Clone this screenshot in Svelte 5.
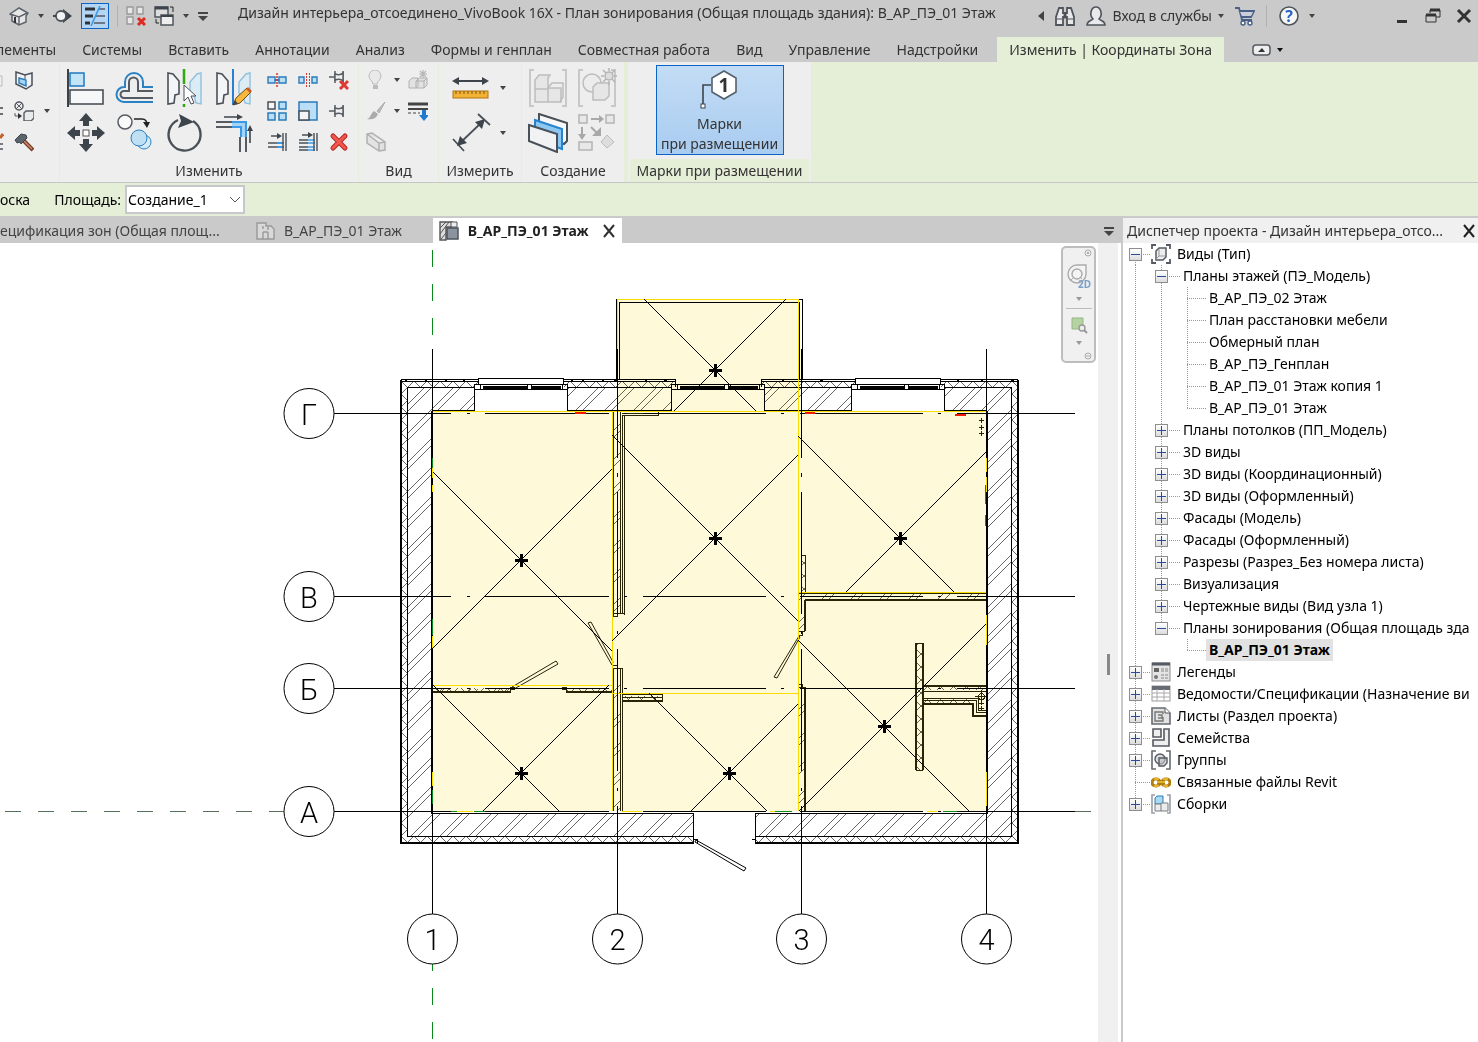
<script lang="ts">
	type Zone = { x1: number; y1: number; x2: number; y2: number; cx: number; cy: number };
	type Row = {
		level: number;
		text: string;
		icon?: string;
		state?: 'open' | 'closed';
		last?: boolean;
		tail?: boolean;
		current?: boolean;
	};

	const menu = [
		'лементы',
		'Системы',
		'Вставить',
		'Аннотации',
		'Анализ',
		'Формы и генплан',
		'Совместная работа',
		'Вид',
		'Управление',
		'Надстройки'
	];

	const mirrorLeft =
		'<path d="M4 5l5 1 6 7v13l-4 1-1 8-6 1z" fill="#f4f5f6" stroke="#4a5058" stroke-width="1.6"/>';
	const mirrorRight =
		'<path d="M37 5l-4 1-7 8v12l4 1 2 8 5 1z" fill="#dcecf5" stroke="#8fc1dd" stroke-width="1.4"/>';
	const bracket = (c: string) =>
		`<path d="M6 2H2v36h4M34 2h4v36h-4" fill="none" stroke="${c}" stroke-width="2"/>`;

	const icons: Record<string, string> = {
		// large, 40 x 40
		align:
			'<path d="M2 1v38" stroke="#3b4148" stroke-width="2"/><rect x="4" y="5" width="14" height="13" fill="#c2e4f6" stroke="#1f78c0" stroke-width="1.5"/><rect x="4" y="22" width="33" height="14" fill="#f6f7f8" stroke="#4a5058" stroke-width="1.6"/>',
		offset:
			'<path d="M38 19H28V14a9 9 0 0 0-18 0v5H9a7 7 0 0 0 0 15h29" fill="none" stroke="#2a82c4" stroke-width="2"/><path d="M38 23H23v-9a4 4 0 0 0-9 0v9H9a3 3 0 0 0 0 7h29" fill="none" stroke="#555b62" stroke-width="2"/>',
		mirrorPick:
			mirrorLeft +
			mirrorRight +
			'<path d="M20 1v15M20 36v3" stroke="#2fa812" stroke-width="2.5"/><path d="M20 17v16l4-4 3 7 3-1-3-7h5z" fill="#fff" stroke="#4a5058"/>',
		mirrorDraw:
			mirrorLeft +
			mirrorRight +
			'<path d="M20 1v36" stroke="#2c7fd0" stroke-width="2"/><path d="M20 37l3-7L34 20l4 4-11 11z" fill="#f6b73c" stroke="#6b4a14"/><path d="M20 37l2-5 3 4z" fill="#444"/><path d="M33 21l4 4 2-2-4-4z" fill="#c65c2c"/>',
		move: '<path d="M20 0l7 8h-4v5h-6V8h-4zM20 39l7-8h-4v-5h-6v5h-4zM1 20l8-7v4h5v6H9v4zM39 20l-8-7v4h-5v6h5v4z" fill="#3d444c"/><rect x="17" y="17" width="6" height="6" fill="#fff" stroke="#555"/>',
		copy: '<circle cx="10" cy="9" r="7" fill="#fafafa" stroke="#555b62" stroke-width="1.5"/><path d="M19 6h8q5 0 5 6" fill="none" stroke="#222" stroke-width="1.5"/><path d="M28 9h7l-3 6z" fill="#222"/><circle cx="29" cy="29" r="7" fill="#d4ecf8" stroke="#2f80bf"/><circle cx="24" cy="25" r="8" fill="#bfe0f3" stroke="#2f80bf"/>',
		rotate:
			'<path d="M14 7a16 16 0 1 0 15 1" fill="none" stroke="#4a5058" stroke-width="2.4"/><path d="M15 1l15 8-16 6 3-7z" fill="#3d444c"/>',
		trim: '<path d="M11 4h14M37 30V16" stroke="#3d444c" stroke-width="1.6"/><path d="M24 1l6 3-6 3zM34 18l3-6 3 6z" fill="#3d444c"/><path d="M3 9h16M3 14h16M27 24v15M33 24v15" stroke="#555b62" stroke-width="2"/><path d="M19 11h12v13" fill="none" stroke="#a5d3f6" stroke-width="4"/><path d="M19 9h14v15M19 14h9v10" fill="none" stroke="#3b9ae8" stroke-width="2"/>',
		ruler:
			'<path d="M6 13h28" stroke="#3d444c" stroke-width="2"/><path d="M1 13l7-4v8zM38 13l-7-4v8z" fill="#3d444c"/><rect x="2" y="23" width="35" height="7" fill="#f2b234" stroke="#b27510"/><path d="M5 23v3M9 23v3M13 23v3M17 23v3M21 23v3M25 23v3M29 23v3M33 23v3" stroke="#7d5310"/>',
		dimension:
			'<path d="M8 31L31 9M2 26l11 12M27 1l12 11" stroke="#4a5058" stroke-width="1.8"/><path d="M6 33l3-10 7 7zM34 6l-3 10-7-7z" fill="#3d444c"/>',
		assembly:
			bracket('#c8c8c8') +
			'<path d="M7 12l4-5h11l-2 3v10h13v14H7z" fill="#e6e6e6" stroke="#bdbdbd" stroke-width="1.5"/><path d="M7 21h13M20 34V20M20 20l4-5h11v14l-3 5" fill="none" stroke="#bdbdbd" stroke-width="1.5"/>',
		group:
			bracket('#c8c8c8') +
			'<circle cx="15" cy="15" r="9" fill="#ececec" stroke="#bdbdbd" stroke-width="1.5"/><path d="M16 19l4-4h12v13l-4 4H16z" fill="#e6e6e6" stroke="#bdbdbd" stroke-width="1.5"/><circle cx="32" cy="8" r="4" fill="#ddd" stroke="#b5b5b5" stroke-width="1.5"/><path d="M32 0v3M32 13v4M24 8h3M37 8h3M26 2l3 3M35 11l3 3M38 2l-3 3M26 14l3-3" stroke="#b5b5b5" stroke-width="1.5"/>',
		parts:
			'<path d="M11 1l28 9v18l-3 3L11 21z" fill="#f6f7f8" stroke="#4a5058" stroke-width="2"/><path d="M7 7l27 9v20L7 26z" fill="#8cc8f2" stroke="#2683cf" stroke-width="2"/><path d="M1 12l28 9v18L1 28z" fill="#f1f2f4" stroke="#4a5058" stroke-width="2"/>',
		flow: '<path d="M2 2h8v8H2zM29 2h8v8h-8zM2 29h13v8H2z" fill="#e8e8e8" stroke="#b4b4b4" stroke-width="1.5"/><path d="M30 22l7 7-7 6-6-6z" fill="#ddd" stroke="#bbb"/><path d="M14 6h9M5 14v9M14 14l6 6" stroke="#a8a8a8" stroke-width="2"/><path d="M22 2l5 4-5 4zM1 21h8l-4 6zM15 23h9v-9z" fill="#a8a8a8"/>',
		tag: '<path d="M3 35V15h8" fill="none" stroke="#3d444c" stroke-width="1.6"/><rect x="1" y="34" width="4" height="4" fill="#fff" stroke="#3d444c"/><path d="M24 1l12 7v14l-12 7-12-7V8z" fill="#fff" stroke="#55606c" stroke-width="1.6"/>',
		// small, 20 x 20
		splitElem:
			'<path d="M1 7h7v6H1zM12 7h7v6h-7z" fill="#b9def5" stroke="#2a7cba" stroke-width="1.4"/><path d="M8 10h4" stroke="#2a7cba" stroke-width="2"/><path d="M10 3v14" stroke="#d33" stroke-width="1.5" stroke-dasharray="2 1"/>',
		splitGap:
			'<path d="M1 7h5v6H1zM14 7h5v6h-5z" fill="#b9def5" stroke="#2a7cba" stroke-width="1.4"/><path d="M8.5 3v14M11.5 3v14" stroke="#d33" stroke-dasharray="2 1"/>',
		unpin:
			'<path d="M0 7h5M6 1v12M14 1v12" fill="none" stroke="#555b62" stroke-width="1.5"/><path d="M6 4c3 1 6 1 8-1v8c-2-2-5-2-8-1z" fill="#eee" stroke="#555b62" stroke-width="1.4"/><path d="M11 11l8 8M19 11l-8 8" stroke="#dd3a33" stroke-width="3"/>',
		array:
			'<rect x="1" y="1" width="7" height="7" fill="#f5f5f5" stroke="#4a5058" stroke-width="1.5"/><path d="M12 1h7v7h-7zM1 12h7v7H1zM12 12h7v7h-7z" fill="#b9def5" stroke="#2a7cba" stroke-width="1.5"/>',
		scale:
			'<rect x="1" y="1" width="18" height="18" fill="#b9def5" stroke="#2a7cba" stroke-width="1.5"/><rect x="1" y="10" width="10" height="9" fill="#f5f5f5" stroke="#4a5058" stroke-width="1.5"/>',
		pin: '<path d="M0 10h5M6 4v12M14 4v12" fill="none" stroke="#555b62" stroke-width="1.5"/><path d="M6 7c3 1 6 1 8-1v8c-2-2-5-2-8-1z" fill="#eee" stroke="#555b62" stroke-width="1.4"/>',
		trimOne:
			'<path d="M4 4h8M1 11h9M1 15h9" stroke="#4a5058" stroke-width="1.6"/><path d="M10 1l5 3-5 3z" fill="#3d444c"/><path d="M10 11h7M10 15h7" stroke="#3b9ae8" stroke-width="2"/><path d="M16 1v18M19 1v18" stroke="#4a5058" stroke-width="1.4"/>',
		trimMany:
			'<path d="M4 3h8M1 8h9M1 11h9M1 15h9M1 18h9" stroke="#4a5058" stroke-width="1.4"/><path d="M10 0l5 3-5 3z" fill="#3d444c"/><path d="M10 8h7M10 11h7M10 15h7M10 18h7" stroke="#3b9ae8" stroke-width="1.6"/><path d="M16 1v18M19 1v18" stroke="#4a5058" stroke-width="1.4"/>',
		remove:
			'<path d="M4 4l12 12M16 4L4 16" stroke="#b5261f" stroke-width="5" stroke-linecap="round"/><path d="M4 4l12 12M16 4L4 16" stroke="#f0574e" stroke-width="3" stroke-linecap="round"/>',
		bulb: '<path d="M7 14c0-3-4-4-4-8a6 6 0 0 1 12 0c0 4-4 5-4 8z" fill="#e9e9e9" stroke="#bbb"/><path d="M7 16h5M7 18h5" stroke="#aaa" stroke-width="1.5"/>',
		explode:
			'<path d="M1 11l3-3h6v8l-2 2H1zM8 11l3-3h8v7l-3 3H8z" fill="#e2e2e2" stroke="#b0b0b0"/><path d="M8 11h8v7M16 11l3-3" stroke="#b0b0b0"/><path d="M15 0v8M11 4h8M12 1l6 6M18 1l-6 6" stroke="#b8b8b8" stroke-width="1.2"/>',
		brush: '<path d="M19 1l-8 9 2 2z" fill="#bbb" stroke="#aaa"/><path d="M1 18c4-1 3-5 7-8l4 3c-2 5-7 6-11 5z" fill="#aaa"/>',
		thinlines:
			'<path d="M0 3h20" stroke="#444" stroke-width="3"/><path d="M0 8h20" stroke="#444" stroke-width="2"/><path d="M0 12h12" stroke="#444" stroke-dasharray="3 2"/><path d="M14 9h4v5h3l-5 6-5-6h3z" fill="#1f79d1"/>',
		box: '<path d="M1 2l5-1 13 9v8l-6 1L1 11zM1 2l12 9 6-1M13 11v8" fill="#e2e2e2" stroke="#b0b0b0" stroke-width="1.5"/>',
		face: '<path d="M2 2l9 3 7-2v12l-6 4-10-5z" fill="#f1f2f3" stroke="#4a5058" stroke-width="1.5"/><path d="M11 5v4" stroke="#4a5058"/><path d="M5 8l7 2v6l-7-3z" fill="#a5d7f5" stroke="#2a7cba" stroke-width="1.4"/>',
		replace:
			'<circle cx="5" cy="5" r="4" fill="#eee" stroke="#555b62" stroke-width="1.5"/><path d="M2 2l6 6M8 2L2 8M1 12v3h4" fill="none" stroke="#555b62"/><path d="M4 12l4 3-4 3z" fill="#333"/><path d="M10 12l2-2h8v7l-3 3h-7z" fill="#e9eaec" stroke="#555b62" stroke-width="1.4"/>',
		hammer:
			'<path d="M9 8l10 10" stroke="#7a3a22" stroke-width="4"/><path d="M9 8l9 9" stroke="#c68a70" stroke-width="1.5"/><path d="M1 8l6-6 5 1 1 3-6 6-1-2-3 1z" fill="#5b636b" stroke="#3d444c"/>',
		// title bar, 20 x 20
		home: '<path d="M1 8l9-6 9 5-2 3v6l-7 3-7-4V9z" fill="#e6e6e6" stroke="#5c636b" stroke-width="1.5"/><path d="M10 10v9M1 8l9 3 8-4" fill="none" stroke="#5c636b" stroke-width="1.4"/><path d="M6 11v6" stroke="#333" stroke-width="2"/>',
		section:
			'<path d="M10 3l9 7-9 7z" fill="#3d444c"/><circle cx="8" cy="10" r="5" fill="#f4f4f4" stroke="#4e555c" stroke-width="1.8"/><path d="M0 10h3" stroke="#3d444c" stroke-width="2"/>',
		thin: '<path d="M0 3h10" stroke="#2e3338" stroke-width="3"/><path d="M0 10h8M0 17h5" stroke="#2e3338" stroke-width="3"/><path d="M13 3h8M11 10h10M9 17h12" stroke="#555b62" stroke-width="1.4"/><path d="M15 0L6 20" stroke="#3b9ae8" stroke-width="1.6"/>',
		closeViews:
			'<path d="M1 1h6v7H1zM11 1h6v7h-6zM1 11h6v7H1z" fill="#e8e8e8" stroke="#999" stroke-width="1.4"/><path d="M12 12l7 7M19 12l-7 7" stroke="#dd2a25" stroke-width="3"/>',
		switchWin:
			'<rect x="1" y="1" width="13" height="10" fill="#ddd" stroke="#4e555c" stroke-width="1.5"/><path d="M1 2h13" stroke="#3d444c" stroke-width="3"/><rect x="7" y="9" width="12" height="10" fill="#eee" stroke="#4e555c" stroke-width="1.5"/><path d="M7 10h12" stroke="#3d444c" stroke-width="2"/><path d="M2 13v4h3M16 1h3v5" fill="none" stroke="#222"/>',
		binoculars:
			'<path d="M1 19V11l3-9h4v5h4V2h4l3 9v8h-7v-8H8v8z" fill="#e8e8e8" stroke="#4e555c" stroke-width="1.8"/><path d="M2 13h5M13 13h5M9 8h2v4H9z" stroke="#4e555c" fill="#4e555c"/>',
		user: '<path d="M1 19c0-4 4-4 6-6-4-4-2-12 3-12s7 8 3 12c2 2 6 2 6 6z" fill="#e9e9e9" stroke="#4e555c" stroke-width="1.6"/>',
		cart: '<path d="M0 2h4l3 12h10M5 5h14l-3 6H6" fill="none" stroke="#4a5f88" stroke-width="1.8"/><path d="M5 6h13l-2 4H7z" fill="#c8cfdb"/><circle cx="8" cy="17" r="2" fill="#fff" stroke="#4a5f88" stroke-width="1.4"/><circle cx="15" cy="17" r="2" fill="#fff" stroke="#4a5f88" stroke-width="1.4"/>',
		// documents and tree, 20 x 20
		plan: '<path d="M2 2h9v3h5l3 3v10H2z" fill="#d9d9d9" stroke="#999" stroke-width="1.4"/><path d="M8 5v3M8 11h5M13 6v3M13 11v7M8 11v7" stroke="#999" stroke-width="1.4"/>',
		area: '<path d="M1 1h12v5H7v13H1z" fill="#ddd" stroke="#555" stroke-width="1.4"/><path d="M1 7l6-6M1 13l9-12M2 18l5-6" stroke="#555"/><path d="M12 1h6v5h-6z" fill="#eee" stroke="#555"/><rect x="8" y="7" width="11" height="11" fill="#8b939f" stroke="#4c535c" stroke-width="1.5"/>',
		views:
			'<path d="M5 1H1v4M15 1h4v4M1 15v4h4M19 15v4h-4" fill="none" stroke="#555b62" stroke-width="1.8"/><path d="M5 7l3-3h7v9l-3 3H5z" fill="#eee" stroke="#555b62" stroke-width="1.5"/><path d="M8 5v7h6M8 12l-3 3" fill="none" stroke="#999"/>',
		legend:
			'<rect x="1" y="1" width="18" height="18" fill="#e4e4e4" stroke="#8b8b8b"/><path d="M1 2h18" stroke="#555b62" stroke-width="3"/><path d="M3 6h5v4H3z" fill="#666"/><circle cx="5" cy="15" r="2" fill="#777"/><path d="M10 7h8M10 9h8M10 13h8M10 16h8" stroke="#888" stroke-dasharray="3 1"/>',
		schedule:
			'<rect x="1" y="2" width="18" height="15" fill="#fff" stroke="#999"/><path d="M1 4h18" stroke="#666c73" stroke-width="4"/><path d="M1 9h18M1 13h18M6 5v12M13 5v12" stroke="#aaa"/>',
		sheet:
			'<path d="M1 2h13l5 5v11H1z" fill="#e2e2e2" stroke="#666c73" stroke-width="1.6"/><path d="M4 13V6h8v2M12 11v4H4v-2M7 9h4v3H7" fill="none" stroke="#777" stroke-width="1.4"/><path d="M14 2v5h5" fill="#fff" stroke="#555"/>',
		family:
			'<path d="M2 1h8v8H2zM13 1h5v17H2v-6h11z" fill="#efefef" stroke="#555b62" stroke-width="1.6"/>',
		groups:
			'<path d="M5 1H1v18h4M15 1h4v18h-4" fill="none" stroke="#666c73" stroke-width="1.6"/><circle cx="9" cy="9" r="5" fill="#ddd" stroke="#555b62" stroke-width="1.4"/><path d="M8 8h8v5l-3 3H8z" fill="#bcc0c5" fill-opacity=".6" stroke="#555b62" stroke-width="1.4"/>',
		link: '<rect x="1" y="7" width="8" height="7" rx="3.5" fill="none" stroke="#b27d0a" stroke-width="3"/><rect x="11" y="7" width="8" height="7" rx="3.5" fill="none" stroke="#b27d0a" stroke-width="3"/><path d="M6 10.500h8" stroke="#b27d0a" stroke-width="3"/><path d="M6 10h8" stroke="#f2c23a" stroke-width="1.5"/><path d="M3 7h5M12 7h5M3 14h5M12 14h5" stroke="#f2c23a" stroke-width="1.5"/>',
		assemblies:
			'<path d="M4 1H1v18h3M16 1h3v18h-3" fill="none" stroke="#9a9fa5" stroke-width="1.6"/><path d="M4 4l2-2h6v7l-2 1H4z" fill="#a9daf2" stroke="#2a7cba"/><path d="M4 10h6v-1h7v8H4z" fill="#ececec" stroke="#777c82"/><path d="M10 10v7" stroke="#777c82"/>'
	};

	const bigTools = ['align', 'offset', 'mirrorPick', 'mirrorDraw', 'move', 'copy', 'rotate', 'trim'];
	const smallTools = [
		'splitElem',
		'splitGap',
		'unpin',
		'array',
		'scale',
		'pin',
		'trimOne',
		'trimMany',
		'remove'
	];
	const createTools = ['assembly', 'group', 'parts', 'flow'];

	const rows: Row[] = [
		{ level: 0, text: 'Виды (Тип)', icon: 'views', state: 'open' },
		{ level: 1, text: 'Планы этажей (ПЭ_Модель)', state: 'open' },
		{ level: 2, text: 'В_АР_ПЭ_02 Этаж' },
		{ level: 2, text: 'План расстановки мебели' },
		{ level: 2, text: 'Обмерный план' },
		{ level: 2, text: 'В_АР_ПЭ_Генплан' },
		{ level: 2, text: 'В_АР_ПЭ_01 Этаж копия 1' },
		{ level: 2, text: 'В_АР_ПЭ_01 Этаж', last: true },
		{ level: 1, text: 'Планы потолков (ПП_Модель)', state: 'closed' },
		{ level: 1, text: '3D виды', state: 'closed' },
		{ level: 1, text: '3D виды (Координационный)', state: 'closed' },
		{ level: 1, text: '3D виды (Оформленный)', state: 'closed' },
		{ level: 1, text: 'Фасады (Модель)', state: 'closed' },
		{ level: 1, text: 'Фасады (Оформленный)', state: 'closed' },
		{ level: 1, text: 'Разрезы (Разрез_Без номера листа)', state: 'closed' },
		{ level: 1, text: 'Визуализация', state: 'closed' },
		{ level: 1, text: 'Чертежные виды (Вид узла 1)', state: 'closed' },
		{ level: 1, text: 'Планы зонирования (Общая площадь зда', state: 'open', last: true },
		{ level: 2, text: 'В_АР_ПЭ_01 Этаж', last: true, tail: true, current: true },
		{ level: 0, text: 'Легенды', icon: 'legend', state: 'closed' },
		{ level: 0, text: 'Ведомости/Спецификации (Назначение ви', icon: 'schedule', state: 'closed' },
		{ level: 0, text: 'Листы (Раздел проекта)', icon: 'sheet', state: 'closed' },
		{ level: 0, text: 'Семейства', icon: 'family', state: 'closed' },
		{ level: 0, text: 'Группы', icon: 'groups', state: 'closed' },
		{ level: 0, text: 'Связанные файлы Revit', icon: 'link' },
		{ level: 0, text: 'Сборки', icon: 'assemblies', state: 'closed', last: true }
	];

	// dotted connector lines of one tree row, 22px high
	function guides(row: Row, first: boolean) {
		const x = 12 + row.level * 26;
		const stop = row.last ? 11 : 22;
		let d = `M${x}.5 ${first ? 11 : 0}V${stop}M${x} 11.5H${x + (row.level ? 20 : 16)}`;
		if (row.level > 0) d += 'M12.5 0V22';
		if (row.level > 1 && !row.tail) d += 'M38.5 0V22';
		return d;
	}

	const zones: Zone[] = [
		{ x1: 617, y1: 299, x2: 798, y2: 411, cx: 715, cy: 370 },
		{ x1: 432, y1: 411, x2: 612, y2: 685, cx: 521, cy: 560 },
		{ x1: 432, y1: 685, x2: 612, y2: 811, cx: 521, cy: 773 },
		{ x1: 612, y1: 411, x2: 798, y2: 693, cx: 715, cy: 538 },
		{ x1: 612, y1: 693, x2: 798, y2: 811, cx: 729, cy: 773 },
		{ x1: 798, y1: 411, x2: 987, y2: 592, cx: 900, cy: 538 },
		{ x1: 798, y1: 592, x2: 987, y2: 811, cx: 884, cy: 726 }
	];

	function cross(z: Zone) {
		const l = z.cx - z.x1;
		const r = z.x2 - z.cx;
		const t = z.cy - z.y1;
		const b = z.y2 - z.cy;
		const ray = (n: number, sx: number, sy: number) =>
			`M${z.cx} ${z.cy}L${z.cx + n * sx} ${z.cy + n * sy}`;
		return (
			ray(Math.min(l, t), -1, -1) +
			ray(Math.min(r, t), 1, -1) +
			ray(Math.min(l, b), -1, 1) +
			ray(Math.min(r, b), 1, 1)
		);
	}

	const columns = [
		{ x: 432, name: '1' },
		{ x: 617, name: '2' },
		{ x: 801, name: '3' },
		{ x: 986, name: '4' }
	];
	const axes = [
		{ y: 413, name: 'Г' },
		{ y: 596, name: 'В' },
		{ y: 688, name: 'Б' },
		{ y: 811, name: 'А' }
	];
	const columnRuns = [
		[349, 458],
		[473, 477],
		[492, 614],
		[631, 634],
		[649, 771],
		[788, 791],
		[806, 914]
	];
	const axisRuns = [
		[334, 451],
		[467, 470],
		[485, 609],
		[624, 627],
		[643, 766],
		[781, 784],
		[800, 923],
		[938, 941],
		[957, 1075]
	];
	const windows = [475, 672, 852];
</script>

{#snippet icon(name: string, size = 20)}
	<svg class="icon" width={size} height={size} viewBox="0 0 {size} {size}" fill="none" aria-hidden="true">
		{@html icons[name]}
	</svg>
{/snippet}

{#snippet caret()}
	<svg class="caret" width="6" height="4" viewBox="0 0 6 4" aria-hidden="true">
		<path d="M0 0h6L3 4z" fill="currentColor" />
	</svg>
{/snippet}

{#snippet listCaret()}
	<svg class="icon" width="10" height="10" viewBox="0 0 10 10" aria-hidden="true">
		<path d="M0 1h10v2H0zM0 5h10L5 10z" fill="#444" />
	</svg>
{/snippet}

<div class="app">
	<header class="titlebar">
		<div class="quick">
			<button aria-label="3D вид">{@render icon('home')}</button>
			<button class="drop" aria-label="Список 3D видов">{@render caret()}</button>
			<button aria-label="Разрез">{@render icon('section')}</button>
			<button class="pressed" aria-label="Тонкие линии">{@render icon('thin')}</button>
			<span class="sep"></span>
			<button aria-label="Закрыть неактивные виды">{@render icon('closeViews')}</button>
			<button aria-label="Переключить окна">{@render icon('switchWin')}</button>
			<button class="drop" aria-label="Список окон">{@render caret()}</button>
			<button aria-label="Настройка панели">{@render listCaret()}</button>
		</div>
		<h1>
			Дизайн интерьера_отсоединено_VivoBook 16X - План зонирования (Общая площадь здания): В_АР_ПЭ_01 Этаж
		</h1>
		<div class="account">
			<button aria-label="Свернуть поиск">
				<svg class="icon" width="6" height="10" viewBox="0 0 6 10"><path d="M6 0v10L0 5z" fill="#444" /></svg>
			</button>
			<button aria-label="Поиск">{@render icon('binoculars')}</button>
			<button class="login">{@render icon('user')} Вход в службы {@render caret()}</button>
			<button aria-label="Магазин">{@render icon('cart')}</button>
			<span class="sep"></span>
			<button class="help" aria-label="Справка">
				<svg class="icon" width="22" height="22" viewBox="0 0 22 22">
					<circle cx="11" cy="11" r="9" fill="#f6f6f6" stroke="#4e555c" stroke-width="1.6" />
					<text x="11" y="17" text-anchor="middle">?</text>
				</svg>
				{@render caret()}
			</button>
		</div>
		<div class="window-buttons">
			<button aria-label="Свернуть">
				<svg width="16" height="16" viewBox="0 0 16 16"><path d="M3 12h10v3H3z" fill="#333" /></svg>
			</button>
			<button aria-label="Восстановить">
				<svg width="16" height="16" viewBox="0 0 16 16" fill="none" stroke="#333">
					<path d="M5 5V2h10v7h-4M1 7h10v7H1z" />
					<path d="M5 2h10M1 7h10" stroke-width="3" />
				</svg>
			</button>
			<button aria-label="Закрыть">
				<svg width="16" height="16" viewBox="0 0 16 16"><path d="M2 2l12 12M14 2L2 14" stroke="#333" stroke-width="3" /></svg>
			</button>
		</div>
	</header>

	<nav class="tabs">
		{#each menu as item}
			<a href="#ribbon">{item}</a>
		{/each}
		<a class="active" href="#ribbon">Изменить | Координаты Зона</a>
		<button class="collapse" aria-label="Свернуть ленту">
			<svg class="icon" width="19" height="12" viewBox="0 0 19 12">
				<rect x="1" y="1" width="17" height="10" rx="3" fill="#eee" stroke="#555b62" stroke-width="1.5" />
				<path d="M6 8h7l-3-4z" fill="#333" />
			</svg>
			{@render caret()}
		</button>
	</nav>

	<section class="ribbon" id="ribbon">
		<div class="panel first">
			<div class="tools">
				<div class="stubs">
					<svg width="4" height="90" viewBox="0 0 4 90" fill="none">
						<path d="M0 14h2v10H0" stroke="#bbb" />
						<path d="M0 46h3M0 52h3" stroke="#444" stroke-width="1.5" />
						<path d="M0 76l3-4" stroke="#c4622c" stroke-width="3" />
						<path d="M0 82h3M0 87h3" stroke="#556" stroke-width="1.5" />
					</svg>
				</div>
				<div class="small-grid one">
					<button aria-label="Соединение">{@render icon('face')}</button>
					<button aria-label="Заменить">{@render icon('replace')}</button>
					<button aria-label="Демонтаж">{@render icon('hammer')}</button>
				</div>
				<button class="drop" aria-label="Ещё">{@render caret()}</button>
			</div>
		</div>
		<div class="panel modify">
			<div class="tools">
				<div class="big-grid four">
					{#each bigTools as name}
						<button aria-label={name}>{@render icon(name, 40)}</button>
					{/each}
				</div>
				<div class="small-grid three">
					{#each smallTools as name}
						<button aria-label={name}>{@render icon(name)}</button>
					{/each}
				</div>
			</div>
			<h2>Изменить</h2>
		</div>
		<div class="panel view">
			<div class="tools">
				<div class="small-grid pairs">
					<button aria-label="Скрыть">{@render icon('bulb')}</button>
					<button class="drop" aria-label="Варианты скрытия">{@render caret()}</button>
					<button aria-label="Смещение">{@render icon('explode')}</button>
					<button aria-label="Графика">{@render icon('brush')}</button>
					<button class="drop" aria-label="Варианты графики">{@render caret()}</button>
					<button aria-label="Вес линий">{@render icon('thinlines')}</button>
					<button aria-label="Рамка выбора">{@render icon('box')}</button>
				</div>
			</div>
			<h2>Вид</h2>
		</div>
		<div class="panel measure">
			<div class="tools">
				<div class="big-grid pick">
					<button aria-label="Линейка">{@render icon('ruler', 40)}</button>
					<button class="drop" aria-label="Варианты линейки">{@render caret()}</button>
					<button aria-label="Размер">{@render icon('dimension', 40)}</button>
					<button class="drop" aria-label="Варианты размера">{@render caret()}</button>
				</div>
			</div>
			<h2>Измерить</h2>
		</div>
		<div class="panel create">
			<div class="tools">
				<div class="big-grid two">
					{#each createTools as name}
						<button aria-label={name}>{@render icon(name, 40)}</button>
					{/each}
				</div>
			</div>
			<h2>Создание</h2>
		</div>
		<div class="panel tagging">
			<div class="tools">
				<button class="tag-button">
					<svg width="40" height="40" viewBox="0 0 40 40" fill="none">
						{@html icons.tag}
						<text x="24" y="22" text-anchor="middle">1</text>
					</svg>
					<span>Марки</span>
					<span>при размещении</span>
				</button>
			</div>
			<h2>Марки при размещении</h2>
		</div>
	</section>

	<div class="options">
		<span>оска</span>
		<label for="area">Площадь:</label>
		<div class="select">
			<select id="area">
				<option>Создание_1</option>
			</select>
			<svg width="10" height="6" viewBox="0 0 10 6" fill="none"><path d="M0 0l5 5 5-5" stroke="#555" /></svg>
		</div>
	</div>

	<div class="workspace">
		<main>
			<div class="documents">
				<a class="doc spec" href="#plan">ецификация зон (Общая площ...</a>
				<a class="doc" href="#plan">{@render icon('plan')} В_АР_ПЭ_01 Этаж</a>
				<div class="doc active">
					{@render icon('area')}
					<a href="#plan">В_АР_ПЭ_01 Этаж</a>
					<button aria-label="Закрыть вид">
						<svg width="14" height="14" viewBox="0 0 14 14"><path d="M2 1l10 12M12 1L2 13" stroke="#333" stroke-width="2" /></svg>
					</button>
				</div>
				<button class="doc-list" aria-label="Список видов">{@render listCaret()}</button>
			</div>
			<div class="canvas-row">
				<div class="canvas" id="plan">
					<svg class="drawing" viewBox="0 243 1098 799" preserveAspectRatio="xMinYMin slice" fill="none" shape-rendering="crispEdges">
						<defs>
							<pattern id="brick" width="29" height="29" patternUnits="userSpaceOnUse">
								<path d="M0 29L29 0M0 7L7 0M7 29L29 7" stroke="#666" />
							</pattern>
							<pattern id="wool" x="401" y="381" width="13" height="13" patternUnits="userSpaceOnUse">
								<path d="M0 0L13 13M13 0L0 13" stroke="#666" />
							</pattern>
						</defs>

						<!-- outer walls -->
						<path d="M401 381H478V387H407V837H693V843H401zM564 381H675V387H564zM761 381H855V387H761zM941 381H1018V843H755V837H1012V387H941z" fill="url(#wool)" />
						<path d="M407 387H475V411H432V813H693V837H407zM567 387H672V411H567zM764 387H852V411H764zM944 387H1012V837H755V813H987V411H944z" fill="url(#brick)" />
						<g stroke="#000">
							<path d="M401 380V843H694M755 843H1018V380" stroke-width="2" />
							<path d="M401 379.5H478M564 379.5H675.5V387M761.5 387V379.5H855M941 379.5H1018M401 381.5H478M564 381.5H675M761 381.5H855M941 381.5H1018" />
							<path d="M407.5 387.5V836.5H693.5V813M755.5 813V836.5H1011.5V387.5M407 387.5H475M567 387.5H672M764 387.5H852M944 387.5H1012" />
							<path d="M432 410.5H475M567 410.5H672M764 410.5H852M944 410.5H987M432 813.5H693.5V843M755.5 843V813.5H987" />
							<path d="M432 411V814M987 411V814" stroke-width="2" />
							<path d="M405 380h2M425 380h2M445 380h2M463 380h2M571 380h2M582 380h2M602 380h2M614 380h4M645 380h2M664 380h3M782 380h2M820 380h3M957 380h2M981 380h2M1011 380h3" stroke-width="2" />
						</g>

						<!-- balcony -->
						<path d="M617 299.5H802.5V380M616.5 299V380M619.5 380V302.5H799.5V380" stroke="#000" />

						<!-- windows -->
						{#each windows as x}
							<g transform="translate({x} 0)" stroke="#000">
								{#if x !== 672}
									<path d="M3.5 378.5h85v6h-85z" fill="#fff" />
								{/if}
								<path d="M-.5 384.5v26M92.5 384.5v26M-.5 384.5h93v5h-93zM5.5 384.5v5M52.5 384.5v5M56.5 384.5v5M87.5 384.5v5" />
								<path d="M8 387.5h44M57 387.5h29" stroke-width="3" />
							</g>
						{/each}

						<!-- inner walls -->
						<path d="M613 411h8v204h-8zM613 668h8v143h-8zM799 601h6v30h-6zM799 687h6v124h-6zM799 593h188v7H799zM432 689h78v3h-78z" fill="url(#brick)" />
						<path d="M916 643h7v127h-7zM801 555h4v37h-4zM432 688h78v4h-78zM567 688h45v4h-45zM623 696h40v5h-40zM923 686h64v4h-64zM923 699h52v4h-52z" fill="url(#wool)" />
						<g stroke="#2a2508">
							<path d="M613.5 411V615.5M620.5 411V613.5M622.5 415V613.5M624.5 415V614.5M613 613.5H625M613 616.5h4v-3M622 415.5H658.5V411M622 413.5H658" />
							<path d="M613.5 668V811M620.5 668V811M622.5 668V811M613 668.5H623M613 665.5h4v3" />
							<path d="M801 555.5h4.5V592M799 593.5H987" />
							<path d="M805 600H987M805 600V631M805 687V811M432 692H511M566 692H612M622 701H663" stroke-width="2" />
							<path d="M622 694.5H662.5V701M622 697.5H662M799 631.5h6M799 635.5h3v-4M799 687.5h6M799 684.5h3v3" />
							<path d="M510.5 688v4M566.5 688v4" />
							<path d="M510 688h5M562 688h5" stroke-width="3" />
							<path d="M916 643V770M923 643V770M923 686H987M923 704H973V716H987" stroke-width="2" />
							<path d="M916 643.5H923M916 770.5H923M923 691.5H987M923 698.5H978.5V710.5H987M923 700.5H976.5V712.5H987" />
							<path d="M981.5 690v12M975 696.5h12M979 703.5h5M979 708.5h5M981.5 701v4M981.5 706v4M979 420.5h5M979 427.5h5M979 433.5h5M981.5 418v5M981.5 425v5M981.5 431v5" />
							<circle cx="981.5" cy="696.5" r="3" />
						</g>

						<!-- doors -->
						<g stroke="#2a2508" shape-rendering="auto">
							<path d="M512 687l44-26 2 3-44 25zM612 665l-24-42 3-1 22 40zM799 636l-25 41 3 1 23-41z" />
							<path d="M695 842l49 29 2-3-50-28z" stroke="#000" />
						</g>
						<path d="M693.5 842.5v-3h4v3M751.5 839.5h4v3" stroke="#000" />

						<!-- zones -->
						{#each zones as z}
							<rect class="zone" x={z.x1} y={z.y1} width={z.x2 - z.x1} height={z.y2 - z.y1} />
						{/each}
						<path d="M617.5 299.5H798.5V811M617.5 299V411M432 411.5H987M612.5 411V811M432 685.5H612M612 693.5H798M799 592.5H987" stroke="#f7dd00" />
						{#each zones as z}
							<path d={cross(z)} stroke="#000" />
							<path d="M{z.cx - 6} {z.cy + 0.5}h13M{z.cx + 0.5} {z.cy - 6}v13" stroke="#000" stroke-width="3" />
						{/each}

						<!-- reference planes -->
						<path d="M432.5 250V349M432.5 954V1042" stroke="#0a8a1c" stroke-dasharray="17 17" />
						<path d="M5 811.5H284M1075 811.5H1094" stroke="#56705a" stroke-dasharray="16 17" />

						<!-- grid -->
						{#each columns as col}
							{#each columnRuns as run}
								<path d="M{col.x + 0.5} {run[0]}V{run[1]}" stroke="#000" />
							{/each}
							<circle cx={col.x + 0.5} cy="939" r="25" fill="#fff" stroke="#000" shape-rendering="auto" />
							<text x={col.x + 0.5} y="950" text-anchor="middle">{col.name}</text>
						{/each}
						{#each axes as axis}
							{#each axisRuns as run}
								<path d="M{run[0]} {axis.y + 0.5}H{run[1]}" stroke="#000" />
							{/each}
							<circle cx="309" cy={axis.y + 0.5} r="25" fill="#fff" stroke="#000" shape-rendering="auto" />
							<text x="309" y={axis.y + 12} text-anchor="middle">{axis.name}</text>
						{/each}

						<path d="M575 412.5h11M805 412.5h10M955 414.5h11" stroke="#f21a00" stroke-width="2" />
						<path d="M985.5 485v19M985.5 515v11" stroke="#f21a00" />
						<path d="M432.5 468v10M432.5 485v7M432.5 636v12M432.5 772v14M986.5 458v14M986.5 477v15M986.5 615v30M986.5 772v34M457 811.5h16M622 811.5h20M770 811.5h8M927 811.5h10" stroke="#f7dd00" />
						<path d="M432.5 458v10M432.5 619v16M432.5 790v14M451 811.5h6M474 811.5h11M775 811.5h17M943 811.5h14" stroke="#0a8a1c" />
					</svg>
					<div class="navbar">
						<svg class="mark" width="8" height="8" viewBox="0 0 8 8" fill="none" stroke="#aaa"><circle cx="4" cy="4" r="3" /><path d="M3 3l2 2M5 3L3 5" /></svg>
						<button aria-label="Штурвал">
							<svg width="26" height="26" viewBox="0 0 26 26" fill="none">
								<path d="M11 1h9v9a9 9 0 1 1-9-9z" fill="#f4f4f4" stroke="#aaa" stroke-width="1.4" />
								<circle cx="11" cy="10" r="5" stroke="#aaa" stroke-width="1.4" />
								<path d="M5 16l3-3M16 15l-2-2" stroke="#aaa" />
								<text x="25" y="24" text-anchor="end">2D</text>
							</svg>
						</button>
						{@render caret()}
						<hr />
						<button aria-label="Масштаб">
							<svg width="18" height="18" viewBox="0 0 18 18" fill="none">
								<path d="M2 2h11v11H2z" fill="#b5d3a2" stroke="#93b881" />
								<circle cx="12" cy="12" r="3" fill="#eee" stroke="#999" stroke-width="1.4" />
								<path d="M14 14l3 3" stroke="#999" stroke-width="2" />
							</svg>
						</button>
						{@render caret()}
						<svg class="mark" width="8" height="8" viewBox="0 0 8 8" fill="none" stroke="#aaa"><circle cx="4" cy="4" r="3" /><path d="M2 4h4" /></svg>
					</div>
				</div>
				<div class="scrollbar"><span></span></div>
			</div>
		</main>

		<aside>
			<div class="aside-title">
				<h2>Диспетчер проекта - Дизайн интерьера_отсо...</h2>
				<button aria-label="Закрыть диспетчер">
					<svg width="14" height="14" viewBox="0 0 14 14"><path d="M2 1l10 12M12 1L2 13" stroke="#222" stroke-width="2" /></svg>
				</button>
			</div>
			<ul>
				{#each rows as row, i}
					<li class="level{row.level}">
						<svg class="guides" width="86" height="22" viewBox="0 0 86 22" fill="none" shape-rendering="crispEdges">
							<path d={guides(row, i === 0)} stroke="#999" stroke-dasharray="1 1" />
						</svg>
						{#if row.state}
							<button class="expander" aria-label={row.state === 'open' ? 'Свернуть' : 'Развернуть'}>
								<svg width="11" height="11" viewBox="0 0 11 11" stroke="#2c4a9c" shape-rendering="crispEdges">
									<path d={row.state === 'open' ? 'M1 5.5h9' : 'M1 5.5h9M5.5 1v9'} />
								</svg>
							</button>
						{:else if row.level === 0}
							<span class="no-expander"></span>
						{/if}
						{#if row.icon}{@render icon(row.icon)}{/if}
						<a href="#plan" class:current={row.current}>{row.text}</a>
					</li>
				{/each}
			</ul>
		</aside>
	</div>
</div>

<style>
	:global(body) {
		margin: 0;
		overflow: hidden;
	}

	.app {
		display: flex;
		flex-direction: column;
		height: 100vh;
		overflow: hidden;
		font-family: 'Noto Sans', 'Open Sans', sans-serif;
		font-size: 14px;
		line-height: 20px;
		color: #333;
		background: #cacaca;
	}

	button {
		display: flex;
		align-items: center;
		justify-content: center;
		margin: 0;
		padding: 0;
		border: 0;
		background: none;
		color: inherit;
		font: inherit;
	}

	a {
		color: inherit;
		text-decoration: none;
		white-space: nowrap;
	}

	svg {
		display: block;
		flex: none;
	}

	h1,
	h2 {
		margin: 0;
		font-size: 14px;
		font-weight: 400;
		white-space: nowrap;
	}

	.caret {
		color: #444;
	}

	.titlebar {
		display: flex;
		align-items: center;
		height: 32px;
		padding-right: 6px;
	}

	.quick {
		display: flex;
		align-items: center;
		gap: 8px;
		width: 238px;
		padding-left: 9px;
		box-sizing: border-box;
	}

	.quick .drop {
		width: 8px;
	}

	.pressed {
		width: 28px;
		height: 26px;
		border: 1px solid #0a64c8;
		background: #b5d5f5;
	}

	.sep {
		width: 1px;
		height: 22px;
		background: #b2b2b2;
	}

	.titlebar h1 {
		line-height: 26px;
		align-self: flex-start;
	}

	.account {
		display: flex;
		align-items: center;
		gap: 11px;
		margin-left: auto;
	}

	.login {
		gap: 6px;
	}

	.help {
		gap: 9px;
	}

	.help text {
		font-size: 16px;
		font-weight: 700;
		fill: #2c63c8;
	}

	.window-buttons {
		display: flex;
		gap: 15px;
		margin-left: 79px;
	}

	.tabs {
		display: flex;
		align-items: flex-end;
		height: 30px;
		margin-left: -4px;
	}

	.tabs a {
		padding: 3px 13px 2px;
	}

	.tabs a:first-child {
		padding-left: 0;
	}

	.tabs .active {
		margin-left: 6px;
		padding: 3px 12px 2px;
		background: #e5efd7;
	}

	.collapse {
		gap: 6px;
		height: 24px;
		margin-left: 28px;
	}

	.collapse .caret {
		color: #111;
	}

	.ribbon {
		display: flex;
		height: 120px;
		border-bottom: 1px solid #c6c6c6;
		background: #e5efd7;
	}

	.panel {
		display: flex;
		flex-direction: column;
		justify-content: space-between;
		margin-right: 1px;
		background: #eee;
	}

	.panel h2 {
		line-height: 23px;
		text-align: center;
	}

	.tools {
		display: flex;
		height: 97px;
	}

	.first {
		width: 59px;
	}

	.first .tools {
		gap: 10px;
	}

	.modify {
		width: 298px;
	}

	.view {
		width: 79px;
	}

	.measure {
		width: 82px;
	}

	.create {
		width: 102px;
	}

	.big-grid,
	.small-grid {
		display: grid;
		align-content: start;
	}

	.big-grid {
		gap: 5px 9px;
		padding: 6px 0 0 6px;
	}

	.small-grid {
		gap: 11px;
		padding-top: 8px;
	}

	.four {
		grid-template-columns: repeat(4, 40px);
	}

	.two {
		grid-template-columns: repeat(2, 40px);
	}

	.pick {
		grid-template-columns: 40px 6px;
		padding-left: 12px;
	}

	.three {
		grid-template-columns: repeat(3, 20px);
		padding-left: 14px;
	}

	.pairs {
		grid-template-columns: 20px 6px 20px;
		gap: 11px 8px;
		padding-left: 7px;
	}

	.tagging {
		width: 183px;
		margin-left: 3px;
	}

	.tagging .tools {
		justify-content: center;
	}

	.tagging h2 {
		margin: 0 2px;
		background: #e5efd7;
	}

	.tag-button {
		flex-direction: column;
		justify-content: flex-start;
		width: 128px;
		height: 90px;
		margin-top: 3px;
		padding-top: 4px;
		border: 1px solid #0a64c8;
		background: linear-gradient(#c3dcf5, #a9ccf0);
	}

	.tag-button span {
		white-space: nowrap;
	}

	.tag-button svg {
		margin-bottom: 4px;
	}

	.tag-button text {
		font-size: 19px;
		font-weight: 700;
		fill: #333;
	}

	.options {
		display: flex;
		align-items: center;
		height: 33px;
		background: #e5efd7;
		color: #000;
	}

	.options label {
		margin-left: 24px;
		margin-right: 4px;
	}

	.select {
		display: grid;
		align-items: center;
	}

	.select > * {
		grid-area: 1 / 1;
	}

	.select svg {
		justify-self: end;
		margin-right: 5px;
		pointer-events: none;
	}

	select {
		width: 120px;
		height: 29px;
		padding: 0 1px;
		border: 2px solid #c8c8cc;
		appearance: none;
		background: #fff;
		font: inherit;
	}

	.workspace {
		display: flex;
		flex: 1;
		min-height: 0;
	}

	main {
		display: flex;
		flex: 1;
		flex-direction: column;
		min-width: 0;
	}

	.documents {
		display: flex;
		align-items: flex-end;
		height: 27px;
		color: #444;
	}

	.doc {
		display: flex;
		align-items: center;
		gap: 9px;
		height: 25px;
	}

	.spec {
		width: 255px;
	}

	.doc.active {
		margin-left: 31px;
		padding: 0 6px;
		background: #fff;
		color: #222;
		font-weight: 700;
	}

	.doc.active button {
		margin-left: 4px;
	}

	.doc-list {
		height: 25px;
		margin-left: auto;
		margin-right: 7px;
	}

	.canvas-row {
		display: flex;
		flex: 1;
		min-height: 0;
		background: #fff;
	}

	.canvas {
		position: relative;
		flex: 1;
		min-width: 0;
		overflow: hidden;
	}

	.drawing {
		width: 100%;
		height: 100%;
	}

	.drawing text {
		font-family: 'Liberation Sans Narrow', Roboto, sans-serif;
		font-size: 29px;
		font-weight: 300;
		fill: #000;
	}

	.zone {
		fill: #fdf9d9;
		mix-blend-mode: multiply;
	}

	.navbar {
		position: absolute;
		top: 3px;
		right: 2px;
		display: flex;
		flex-direction: column;
		align-items: center;
		justify-content: space-between;
		width: 31px;
		height: 111px;
		padding: 1px 0;
		border: 2px solid #bdbdbd;
		border-radius: 5px;
		background: #f0f0f0;
	}

	.navbar .caret {
		color: #999;
	}

	.navbar .mark {
		align-self: flex-end;
		margin-right: 2px;
	}

	.navbar hr {
		width: 26px;
		margin: 0;
		border: 0;
		border-top: 1px solid #bbb;
	}

	.navbar text {
		font-size: 10px;
		font-weight: 700;
		fill: #7da0c8;
	}

	.scrollbar {
		display: flex;
		align-items: center;
		justify-content: center;
		width: 20px;
		margin-right: 3px;
		padding-top: 44px;
		box-sizing: border-box;
		background: #f0f0f0;
	}

	.scrollbar span {
		width: 3px;
		height: 21px;
		background: #888;
	}

	aside {
		width: 355px;
		margin-top: 2px;
		border-left: 2px solid #cacaca;
		box-sizing: content-box;
		background: #fff;
		overflow: hidden;
	}

	.aside-title {
		display: flex;
		align-items: center;
		justify-content: space-between;
		height: 25px;
		padding: 0 2px 0 4px;
		background: #f0f0f0;
	}

	aside ul {
		margin: 0;
		padding: 0;
		list-style: none;
		color: #000;
	}

	li {
		position: relative;
		display: flex;
		align-items: center;
		height: 22px;
	}

	.level0 {
		padding-left: 6px;
	}

	.level1 {
		padding-left: 32px;
	}

	.level2 {
		padding-left: 83px;
	}

	.guides {
		position: absolute;
		left: 0;
		top: 0;
	}

	.expander {
		position: relative;
		width: 13px;
		height: 13px;
		border: 1px solid #8e8e8e;
		background: linear-gradient(#fff, #dcdcdc);
	}

	.no-expander {
		width: 13px;
	}

	li .icon {
		position: relative;
		margin-left: 9px;
		background: #fff;
	}

	li a {
		padding: 0 3px;
		line-height: 22px;
	}

	.level0 a {
		margin-left: 3px;
	}

	.level1 a {
		margin-left: 12px;
	}

	.current {
		background: #e2e2e2;
		font-weight: 700;
	}
</style>
